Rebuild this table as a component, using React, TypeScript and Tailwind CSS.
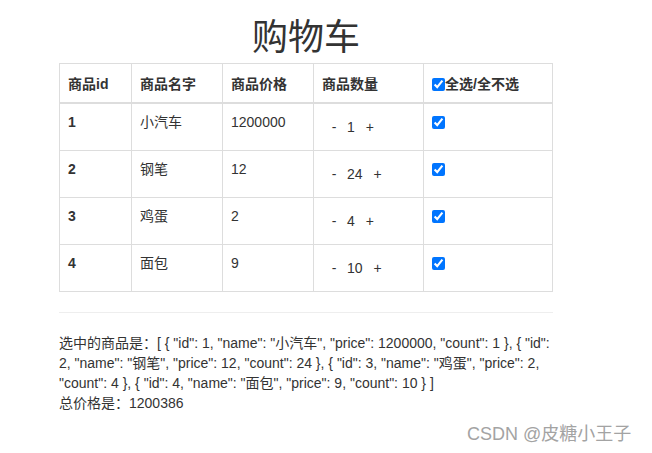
import { useState } from "react"

type Item = { id: number; name: string; price: number; count: number }

const initialItems: Item[] = [
  { id: 1, name: "小汽车", price: 1200000, count: 1 },
  { id: 2, name: "钢笔", price: 12, count: 24 },
  { id: 3, name: "鸡蛋", price: 2, count: 4 },
  { id: 4, name: "面包", price: 9, count: 10 },
]

export default function App() {
  const [items, setItems] = useState(initialItems)
  const [checked, setChecked] = useState<number[]>([1, 2, 3, 4])

  const allChecked = checked.length === items.length

  const changeCount = (id: number, delta: number) => {
    setItems(items.map((it) => (it.id === id ? { ...it, count: Math.max(1, it.count + delta) } : it)))
  }

  const toggle = (id: number) => {
    setChecked(checked.includes(id) ? checked.filter((c) => c !== id) : [...checked, id])
  }

  const toggleAll = () => {
    setChecked(allChecked ? [] : items.map((it) => it.id))
  }

  const selected = items.filter((it) => checked.includes(it.id))
  const total = selected.reduce((sum, it) => sum + it.price * it.count, 0)
  // mimic vue's {{ }} JSON output, flattened onto one line
  const selectedText =
    "[ " +
    selected
      .map((it) => `{ "id": ${it.id}, "name": "${it.name}", "price": ${it.price}, "count": ${it.count} }`)
      .join(", ") +
    " ]"

  return (
    <div className="relative min-h-[453px] bg-white font-['Liberation_Sans','Noto_Sans_CJK_SC',sans-serif] text-[14px] leading-[20px] text-[#333]">
      <div className="ml-[59px] w-[494px] pt-[14px]">
        {/* 标题 */}
        <h1 className="mb-[9px] text-center font-['Noto_Sans_CJK_SC',sans-serif] text-[36px] font-normal leading-[40px] text-[#333]">
          购物车
        </h1>

        <table className="w-full border-collapse border border-[#ddd]">
          <thead>
            <tr>
              <th className="w-[72px] border border-b-2 border-[#ddd] px-2 pt-[10px] pb-2 text-left align-bottom font-bold">商品id</th>
              <th className="w-[91px] border border-b-2 border-[#ddd] px-2 pt-[10px] pb-2 text-left align-bottom font-bold">商品名字</th>
              <th className="w-[91px] border border-b-2 border-[#ddd] px-2 pt-[10px] pb-2 text-left align-bottom font-bold">商品价格</th>
              <th className="w-[110px] border border-b-2 border-[#ddd] px-2 pt-[10px] pb-2 text-left align-bottom font-bold">商品数量</th>
              <th className="border border-b-2 border-[#ddd] px-2 pt-[10px] pb-2 text-left align-bottom font-bold">
                <label className="flex items-center">
                  <input
                    type="checkbox"
                    checked={allChecked}
                    onChange={toggleAll}
                    className="m-0 h-[13px] w-[13px]"
                  />
                  全选/全不选
                </label>
              </th>
            </tr>
          </thead>
          <tbody>
            {items.map((it) => (
              <tr key={it.id}>
                <td className="border border-[#ddd] p-2 align-top font-bold">{it.id}</td>
                <td className="border border-[#ddd] p-2 align-top">{it.name}</td>
                <td className="border border-[#ddd] p-2 align-top">{it.price}</td>
                <td className="border border-[#ddd] p-2 align-top">
                  <div className="flex h-[30px] items-center">
                    <button className="w-[24px] text-center" onClick={() => changeCount(it.id, -1)}>
                      -
                    </button>
                    <span className="ml-[1px]">{it.count}</span>
                    <button className="ml-[3px] w-[24px] text-center" onClick={() => changeCount(it.id, 1)}>
                      +
                    </button>
                  </div>
                </td>
                <td className="border border-[#ddd] p-2 align-top">
                  <input
                    type="checkbox"
                    checked={checked.includes(it.id)}
                    onChange={() => toggle(it.id)}
                    className="m-0 mt-[4px] block h-[13px] w-[13px]"
                  />
                </td>
              </tr>
            ))}
          </tbody>
        </table>

        <hr className="mt-[20px] mb-[20px] border-0 border-t border-[#eee]" />

        <div>
          <p>{`选中的商品是：${selectedText}`}</p>
          <p>{`总价格是：${total}`}</p>
        </div>
      </div>

      {/* 水印 */}
      <div className="absolute top-[422px] left-[467px] font-['Liberation_Sans','Noto_Sans_CJK_SC',sans-serif] text-[18px] leading-[24px] text-[#a3a3a3]">
        CSDN @皮糖小王子
      </div>
    </div>
  )
}
